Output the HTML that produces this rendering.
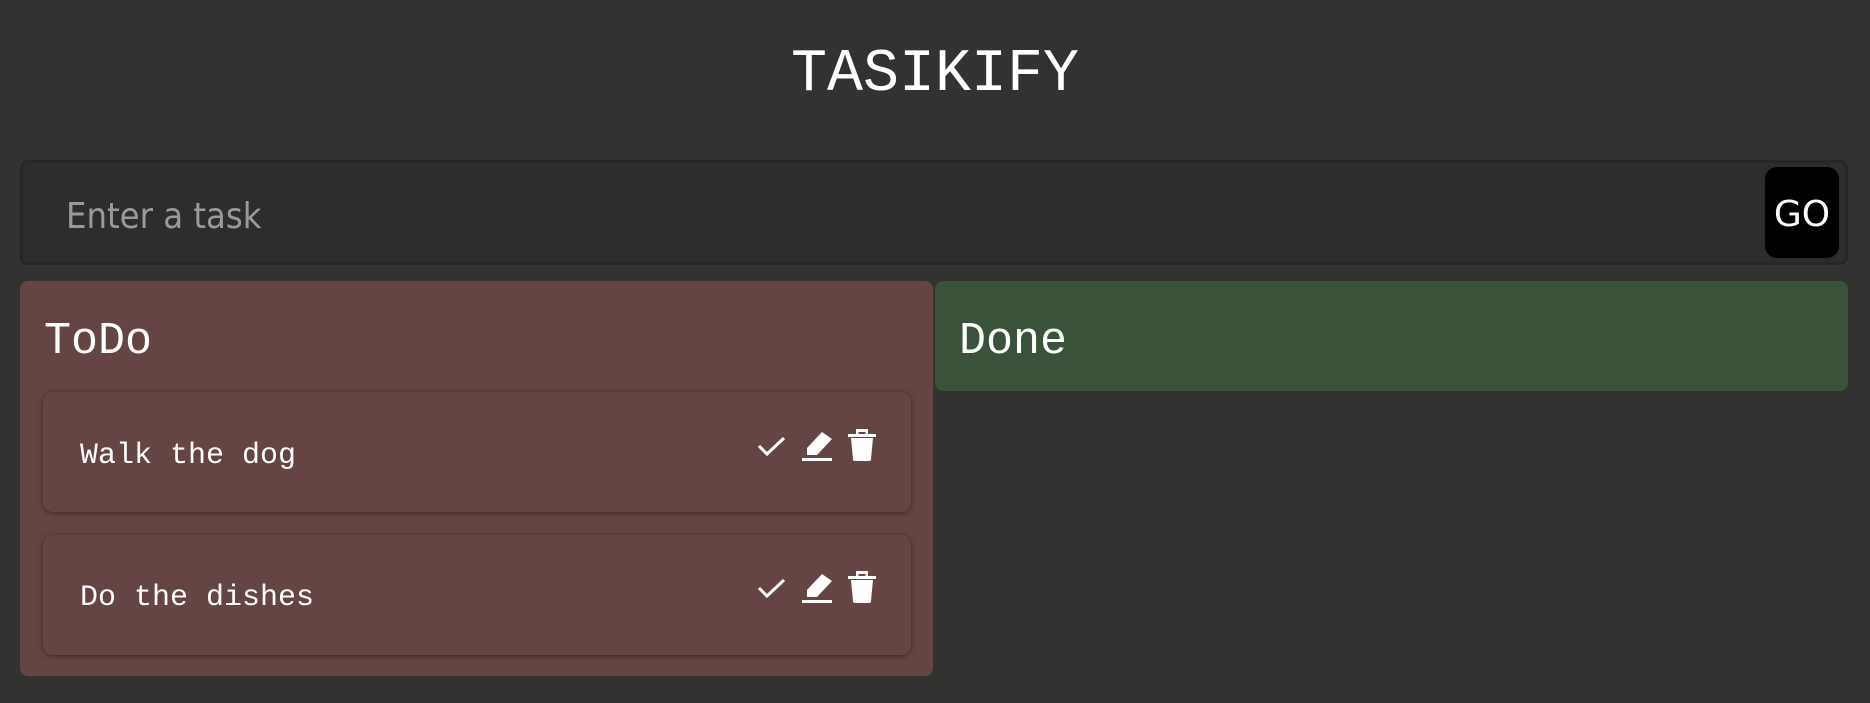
<!DOCTYPE html>
<html><head><style>
*{box-sizing:border-box;margin:0;padding:0}
body{width:1870px;height:703px;background:#323230;font-family:"Liberation Mono",monospace;color:#fff;position:relative;overflow:hidden}
.abs{position:absolute}
h1{position:absolute;left:0;width:1870px;top:39px;text-align:center;font-weight:normal;font-size:60px;line-height:72px}
.input{left:20px;top:160px;width:1828px;height:105px;background:#2d2d2d;border-radius:8px;box-shadow:0 0 3px #1c1c1c inset;border:1px solid #262626}
.ph{left:66px;top:195px;font-family:"DejaVu Sans Condensed","Liberation Sans",sans-serif;font-size:36px;color:#9a9a9a;line-height:44px}
.go{left:1765px;top:167px;width:74px;height:91px;background:#000;border-radius:12px;font-family:"DejaVu Sans","Liberation Sans",sans-serif;font-size:36px;line-height:95px;text-align:center}
.todo{left:20px;top:281px;width:913px;height:395px;background:#654544;border-radius:8px}
.done{left:935px;top:281px;width:913px;height:110px;background:#3a5239;border-radius:8px}
.hd{font-size:45px;line-height:56px}
.card{left:43px;width:868px;height:120px;background:#654544;border-radius:10px;box-shadow:0 1px 6px rgba(0,0,0,.45)}
.txt{font-size:30px;line-height:36px}
</style></head><body>
<h1>TASIKIFY</h1>
<div class="abs input"></div>
<div class="abs ph">Enter a task</div>
<div class="abs go">GO</div>
<div class="abs todo"></div>
<div class="abs done"></div>
<div class="abs hd" style="left:44px;top:314px">ToDo</div>
<div class="abs hd" style="left:959px;top:314px">Done</div>
<div class="abs card" style="top:392px"></div>
<div class="abs card" style="top:535px"></div>
<div class="abs txt" style="left:80px;top:438px">Walk the dog</div>
<div class="abs txt" style="left:80px;top:580px">Do the dishes</div>
<svg class="abs" style="left:750px;top:425px" width="140" height="40" viewBox="0 0 140 40">
<path d="M9 21 L17 29 L34 13" stroke="#fff" stroke-width="3" fill="none"/>
<path d="M72 7 L82 14 L67 30 L57 30 L57 23 Z" fill="#fff"/>
<rect x="52" y="33" width="30" height="3" fill="#fff"/>
<rect x="98" y="9" width="28" height="3" fill="#fff"/>
<rect x="106" y="4" width="12" height="3" fill="#fff"/><rect x="106" y="4" width="2.5" height="7" fill="#fff"/><rect x="115.5" y="4" width="2.5" height="7" fill="#fff"/>
<path d="M101 13 H123 L121 34 Q121 36 119 36 H105 Q103 36 103 34 Z" fill="#fff"/>
</svg>
<svg class="abs" style="left:750px;top:567px" width="140" height="40" viewBox="0 0 140 40">
<path d="M9 21 L17 29 L34 13" stroke="#fff" stroke-width="3" fill="none"/>
<path d="M72 7 L82 14 L67 30 L57 30 L57 23 Z" fill="#fff"/>
<rect x="52" y="33" width="30" height="3" fill="#fff"/>
<rect x="98" y="9" width="28" height="3" fill="#fff"/>
<rect x="106" y="4" width="12" height="3" fill="#fff"/><rect x="106" y="4" width="2.5" height="7" fill="#fff"/><rect x="115.5" y="4" width="2.5" height="7" fill="#fff"/>
<path d="M101 13 H123 L121 34 Q121 36 119 36 H105 Q103 36 103 34 Z" fill="#fff"/>
</svg>
</body></html>
